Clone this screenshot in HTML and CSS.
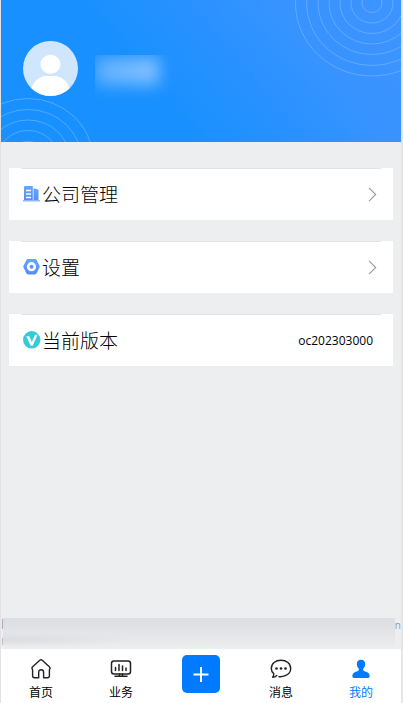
FILE: index.html
```
<!DOCTYPE html>
<html lang="zh-CN">
<head>
<meta charset="utf-8">
<meta name="viewport" content="width=device-width, initial-scale=1">
<title>我的</title>
<link rel="stylesheet" href="styles.css">
</head>
<body>
<div class="app">
  <header class="profile">
    <svg class="rings rings-top" width="160" height="80" viewBox="0 0 160 80" aria-hidden="true">
      <g fill="none" stroke="#fff" stroke-opacity=".2">
        <ellipse cx="80" cy="3" rx="10" ry="9.5"/><ellipse cx="80" cy="3" rx="21" ry="20"/><ellipse cx="80" cy="3" rx="32" ry="30.5"/><ellipse cx="80" cy="3" rx="43" ry="41"/><ellipse cx="80" cy="3" rx="54" ry="51.5"/><ellipse cx="80" cy="3" rx="65.5" ry="62.5"/><ellipse cx="80" cy="3" rx="76.5" ry="73"/>
      </g>
    </svg>
    <svg class="rings rings-bottom" width="100" height="50" viewBox="0 0 100 50" aria-hidden="true">
      <g fill="none" stroke="#fff" stroke-opacity=".24">
        <ellipse cx="27" cy="68" rx="65" ry="61.5"/><ellipse cx="27" cy="68" rx="53.5" ry="50.5"/><ellipse cx="27" cy="68" rx="42" ry="40"/><ellipse cx="27" cy="68" rx="31" ry="29.5"/><ellipse cx="27" cy="68" rx="19.5" ry="18.5"/>
      </g>
    </svg>
    <svg class="avatar" viewBox="0 0 55 55" role="img" aria-label="头像">
      <clipPath id="face"><circle cx="27.5" cy="27.5" r="27.5"/></clipPath>
      <g clip-path="url(#face)">
        <rect width="55" height="55" fill="#d0e6fd"/>
        <ellipse cx="27.5" cy="23.3" rx="10" ry="9.6" fill="#fff"/>
        <path d="M8 48C11 40 17 35 23 35h9c6 0 12 5 15 13v7H8z" fill="#fff"/>
      </g>
    </svg>
    <div class="name-mask"><div class="name-glow"></div></div>
  </header>

  <main class="menu">
    <a class="card" href="#">
      <svg class="card-icon" viewBox="0 0 18 18" aria-hidden="true">
        <defs><linearGradient id="blue" x2="0" y2="1"><stop stop-color="#65a6ff"/><stop offset="1" stop-color="#568cf5"/></linearGradient></defs>
        <path d="M1 2.2Q1 1 2.2 1h7.6V16H1z" fill="url(#blue)"/><path d="M10.5 3.2l4 1q1 .3 1 1.3V16h-5z" fill="url(#blue)"/>
        <path d="M0 15h17v1.5H0z" fill="#91b8fa"/><path d="M3 5.5h5M3 9h5M3 12.5h5" stroke="#fff" stroke-width="1.4"/>
      </svg>
      <span class="card-title">公司管理</span>
      <svg class="arrow" viewBox="0 0 9 15" aria-hidden="true"><path d="M1 .8l6.7 6.7L1 14.2" fill="none" stroke="#999" stroke-width="1.1"/></svg>
    </a>
    <a class="card" href="#">
      <svg class="card-icon" viewBox="0 0 18 18" aria-hidden="true">
        <path d="M5 1h7q1 0 1.5.8l3 6q.5.9 0 1.8l-3 6q-.5.8-1.5.8H5q-1 0-1.5-.8l-3-6q-.5-.9 0-1.8l3-6Q4 1 5 1z" fill="url(#blue)"/>
        <circle cx="8.5" cy="8.7" r="3.3" fill="#5b96f9" stroke="#fff" stroke-width="2.6"/>
      </svg>
      <span class="card-title">设置</span>
      <svg class="arrow" viewBox="0 0 9 15" aria-hidden="true"><path d="M1 .8l6.7 6.7L1 14.2" fill="none" stroke="#999" stroke-width="1.1"/></svg>
    </a>
    <div class="card">
      <svg class="card-icon" viewBox="0 0 18 18" aria-hidden="true">
        <circle cx="8.7" cy="8.8" r="8.7" fill="#35cbd9"/>
        <path d="M3.3 5.3h3L8.8 11 12 3.8h2.6L9.6 14.7H7.8z" fill="#fff"/>
      </svg>
      <span class="card-title">当前版本</span>
      <span class="version">oc202303000</span>
    </div>
  </main>

  <div class="caption">
    <div class="caption-edge"><i></i><i></i></div>
    <div class="caption-mask"></div>
    <div class="caption-tail">n</div>
  </div>

  <nav class="tabs">
    <a class="tab" href="#">
      <svg class="tab-icon" viewBox="0 0 22 22" fill="none" stroke="#222" stroke-width="1.4" stroke-linejoin="round" aria-hidden="true"><path d="M8.7 19.7H4.5Q2.6 19.7 2.6 17.8V12.2Q2.6 11 1.9 10.4Q1.9 9.5 2.7 8.7L9.8 2.3Q11 1.3 12.2 2.3L19.3 8.7Q20.1 9.5 20.1 10.4Q19.4 11 19.4 12.2V17.8Q19.4 19.7 17.5 19.7H13.6V14.2Q13.6 11.8 11.1 11.8T8.7 14.2z"/></svg>
      <span>首页</span>
    </a>
    <a class="tab" href="#">
      <svg class="tab-icon" viewBox="0 0 22 22" fill="none" stroke="#222" stroke-width="1.5" stroke-linecap="round" aria-hidden="true"><rect x="1.5" y="3" width="19" height="13" rx="2.5"/><path d="M5.5 9.5v3M9 6.5v6M12.5 8v4.5M16 10v2.5M9.5 16v2M12.5 16v2M5 18.2h12"/></svg>
      <span>业务</span>
    </a>
    <div class="tab-add">
      <button class="add" type="button" aria-label="新建"><svg viewBox="0 0 38 38" aria-hidden="true"><path d="M19 12v15M11.5 19.5h15" stroke="#fff" stroke-width="2"/></svg></button>
    </div>
    <a class="tab" href="#">
      <svg class="tab-icon" viewBox="0 0 22 22" aria-hidden="true"><path d="M9 18.7Q12.5 19 15.2 17.7Q20.7 15.5 20.7 10.5C20.7 5.5 16.5 2.3 11 2.3S1.3 5.5 1.3 10.5Q1.3 13.5 3.8 15.8Q3.7 17.8 2.7 19.2Q5 19.2 6.8 17.5" fill="none" stroke="#222" stroke-width="1.4" stroke-linecap="round" stroke-linejoin="round"/><g fill="#222"><circle cx="6.5" cy="10.5" r="1.3"/><circle cx="11" cy="10.5" r="1.3"/><circle cx="15.5" cy="10.5" r="1.3"/></g></svg>
      <span>消息</span>
    </a>
    <a class="tab tab-active" href="#" aria-current="page">
      <svg class="tab-icon" viewBox="0 0 22 22" fill="#007aff" aria-hidden="true"><path d="M11 1.8C8.3 1.8 6.7 3.7 6.8 6.2Q7 9.3 8.9 11Q9.3 12.3 8 12.9L4.7 14.2Q2.3 15.3 2.3 17.7Q2.3 19.9 4 19.9H18Q19.7 19.9 19.7 17.7Q19.7 15.3 17.3 14.2L14 12.9Q12.7 12.3 13.1 11Q15 9.3 15.2 6.2C15.3 3.7 13.7 1.8 11 1.8z"/></svg>
      <span>我的</span>
    </a>
  </nav>
</div>
</body>
</html>
```
FILE: styles.css
```
* {
  box-sizing: border-box;
}

body {
  margin: 0;
  font-family: "Noto Sans CJK SC", sans-serif;
  color: #000;
}

a {
  color: inherit;
  text-decoration: none;
}

.app {
  display: flex;
  flex-direction: column;
  min-height: 100vh;
  background: #edeef0;
  border-left: 1px solid #e1e2e4;
  border-right: 2px solid #e4e5e7;
}

.profile {
  position: relative;
  overflow: hidden;
  display: flex;
  align-items: flex-start;
  gap: 17px;
  padding: 41px 22px 43px;
  background: linear-gradient(50deg, #1890ff 37%, #3893ff 76%, #3d94ff);
}

.rings {
  position: absolute;
}

.rings-top {
  top: 0;
  right: -51px;
}

.rings-bottom {
  left: 0;
  bottom: 0;
}

.avatar {
  position: relative;
  width: 55px;
  height: 55px;
}

.name-mask {
  width: 80px;
  height: 44px;
  margin-top: 14px;
  overflow: hidden;
}

.name-glow {
  width: 64px;
  height: 28px;
  margin-top: 2px;
  background: linear-gradient(90deg, #5eafff, #86c2ff);
  filter: blur(8px);
}

.menu {
  display: flex;
  flex-direction: column;
  gap: 21px;
  padding: 26px 8px;
}

.card {
  position: relative;
  display: flex;
  align-items: center;
  height: 52px;
  padding: 0 16px 0 14px;
  background: #fff;
}

.card::before {
  content: "";
  position: absolute;
  top: 0;
  left: 12px;
  right: 12px;
  height: 1px;
  background: #e2e2e4;
}

.card-icon {
  width: 18px;
  height: 18px;
  margin-right: 1px;
}

.card-title {
  flex: 1;
  font-size: 19px;
  font-weight: 300;
  line-height: 28px;
}

.arrow {
  width: 9px;
  height: 15px;
}

.version {
  padding-right: 4px;
  font-family: "Open Sans", sans-serif;
  font-size: 12px;
}

.caption {
  display: flex;
  height: 31px;
  margin-top: auto;
}

.caption-edge {
  display: flex;
  flex-direction: column;
  gap: 9px;
  width: 2px;
  padding: 1px 0 0 1px;
}

.caption-edge i {
  height: 10px;
  background: #b3a5bc;
}

.caption-edge i + i {
  height: 7px;
  background: #c9b9bd;
}

.caption-mask {
  flex: 1;
  background:
    radial-gradient(ellipse at 0 70%, #dcdde0, #dcdde000 24%),
    linear-gradient(#dcdde1, #e2e3e6 40%, #edeef0);
}

.caption-tail {
  font-family: "Open Sans", sans-serif;
  font-size: 10px;
  line-height: 14px;
  color: #8b9aba;
}

.tabs {
  display: grid;
  grid-template-columns: repeat(5, 1fr);
  height: 54px;
  background: #fff;
}

.tab {
  display: flex;
  flex-direction: column;
  align-items: center;
  gap: 4px;
  padding-top: 9px;
  font-size: 12px;
  line-height: 16px;
}

.tab-active {
  color: #007aff;
}

.tab-icon {
  width: 22px;
  height: 22px;
}

.tab-add {
  display: flex;
  justify-content: center;
  padding-top: 6px;
}

.add {
  width: 38px;
  height: 38px;
  padding: 0;
  border: 0;
  border-radius: 5px;
  background: #007aff;
}

.add svg {
  display: block;
}
```
